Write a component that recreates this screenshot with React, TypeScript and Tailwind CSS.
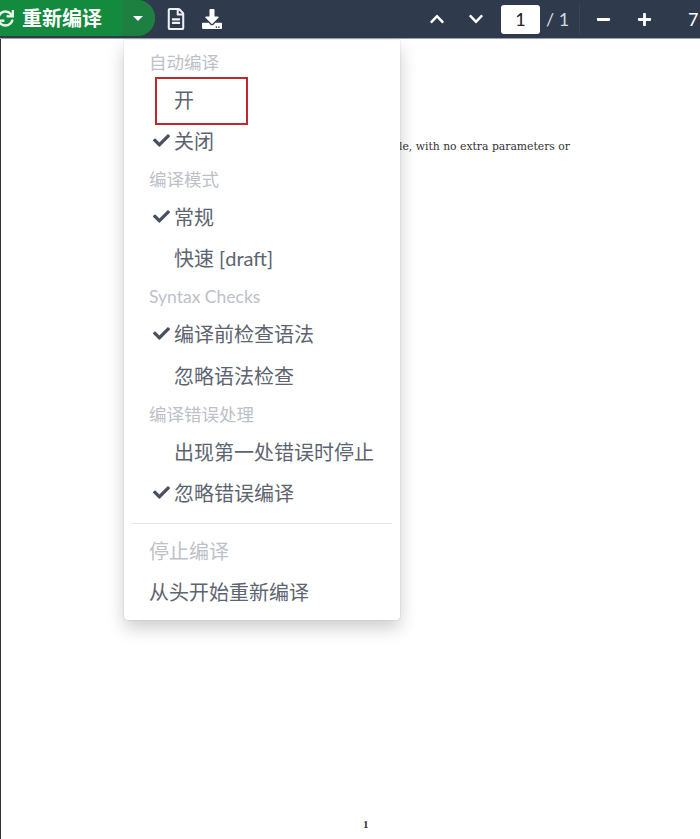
import React from 'react'
import { FaCheck, FaChevronDown, FaChevronUp, FaDownload, FaMinus, FaPlus, FaRegFileAlt, FaSync } from 'react-icons/fa'

const font = { sans: "font-['Lato','Noto_Sans_CJK_SC',sans-serif]" }

const Header = ({ children, className = 'h-[35px] leading-[37px]' }: { children: React.ReactNode; className?: string }) => (
  <div className={`pl-[25px] text-[17.5px] text-[#bcc1c9] ${className}`}>{children}</div>
)

const Item = ({ children, checked, className = '' }: { children: React.ReactNode; checked?: boolean; className?: string }) => (
  <div className={`flex h-[41px] items-center pl-[29px] text-[20px] text-[#5d6470] ${className}`}>
    <span className="flex w-[21px] shrink-0 items-center">{checked && <FaCheck className="text-[17px] text-[#49505e]" />}</span>
    {children}
  </div>
)

const App = () => {
  return (
    <div className={`relative h-[839px] w-[700px] overflow-hidden bg-white ${font.sans}`}>
      {/* toolbar */}
      <div className="flex h-[39px] items-center overflow-hidden whitespace-nowrap border-b border-[#9aa3b0] bg-[#2f3a4c] text-white">
        <div className="flex h-[36px] w-[155px] shrink-0 -translate-y-px items-center rounded-r-[18px] bg-[#138a3e]">
          <div className="flex w-[122px] shrink-0 items-center">
            <FaSync className="ml-[-3px] text-[17px] text-[#e8f5ec]" />
            <span className="ml-[8px] text-[20px] font-bold leading-none">重新编译</span>
          </div>
          <div className="flex h-full flex-1 items-center justify-center rounded-r-[18px] bg-[#1d7f40] pr-[2px]">
            <div className="h-0 w-0 border-x-[5px] border-t-[5px] border-x-transparent border-t-white" />
          </div>
        </div>
        <FaRegFileAlt className="ml-[10px] shrink-0 text-[22px] text-[#eef0f3]" />
        <FaDownload className="ml-[15px] shrink-0 text-[20px]" />
        <FaChevronUp className="ml-[207px] shrink-0 text-[16px]" />
        <FaChevronDown className="ml-[23px] shrink-0 text-[16px]" />
        <div className="ml-[17px] flex h-[29px] w-[39px] shrink-0 items-center justify-center rounded-[3px] bg-white text-[18px] text-[#222]">1</div>
        <span className="ml-[6px] w-[23px] shrink-0 text-[18px] text-[#d5d9df]">/ 1</span>
        <div className="ml-[10px] h-[30px] w-px shrink-0 bg-[#3a4557]" />
        <FaMinus className="ml-[16px] shrink-0 text-[15px]" />
        <FaPlus className="ml-[26px] shrink-0 text-[15px]" />
        <span className="ml-[36px] shrink-0 text-[18px]">71%</span>
      </div>

      {/* pdf page */}
      <div className="relative h-[800px] border-l border-[#333]">
        <p className="pr-[130px] pt-[101px] text-right font-['DejaVu_Serif',serif] text-[10.8px] leading-[14px] text-[#333]">
          le, with no extra parameters or
        </p>
        <p className="absolute left-[362px] top-[777px] font-['Liberation_Serif',serif] text-[11px] font-bold text-[#333]">1</p>
      </div>

      {/* dropdown */}
      <div className="absolute left-[124px] top-[40px] h-[580px] w-[276px] rounded-b-[3px] bg-white pt-[5px] shadow-[0_0_1px_rgba(0,0,0,0.4),0_8px_18px_rgba(0,0,0,0.2)]">
        <Header className="h-[34px] leading-[35px]">自动编译</Header>
        <Item>开</Item>
        <Item checked>关闭</Item>
        <Header>编译模式</Header>
        <Item checked>常规</Item>
        <Item>快速 [draft]</Item>
        <Header>Syntax Checks</Header>
        <Item checked>编译前检查语法</Item>
        <Item className="mt-px">忽略语法检查</Item>
        <Header>编译错误处理</Header>
        <Item>出现第一处错误时停止</Item>
        <Item checked>忽略错误编译</Item>
        <div className="mx-[8px] mb-[6px] mt-[10px] border-t border-[#e6e7ea]" />
        <div className="flex h-[41px] items-center pl-[25px] text-[20px] text-[#bcc1c9]">停止编译</div>
        <div className="flex h-[41px] items-center pl-[25px] text-[20px] text-[#5d6470]">从头开始重新编译</div>
        <div className="absolute left-[31px] top-[37px] h-[48px] w-[93px] border-2 border-[#c1272d]" />
      </div>
    </div>
  )
}

export default App
